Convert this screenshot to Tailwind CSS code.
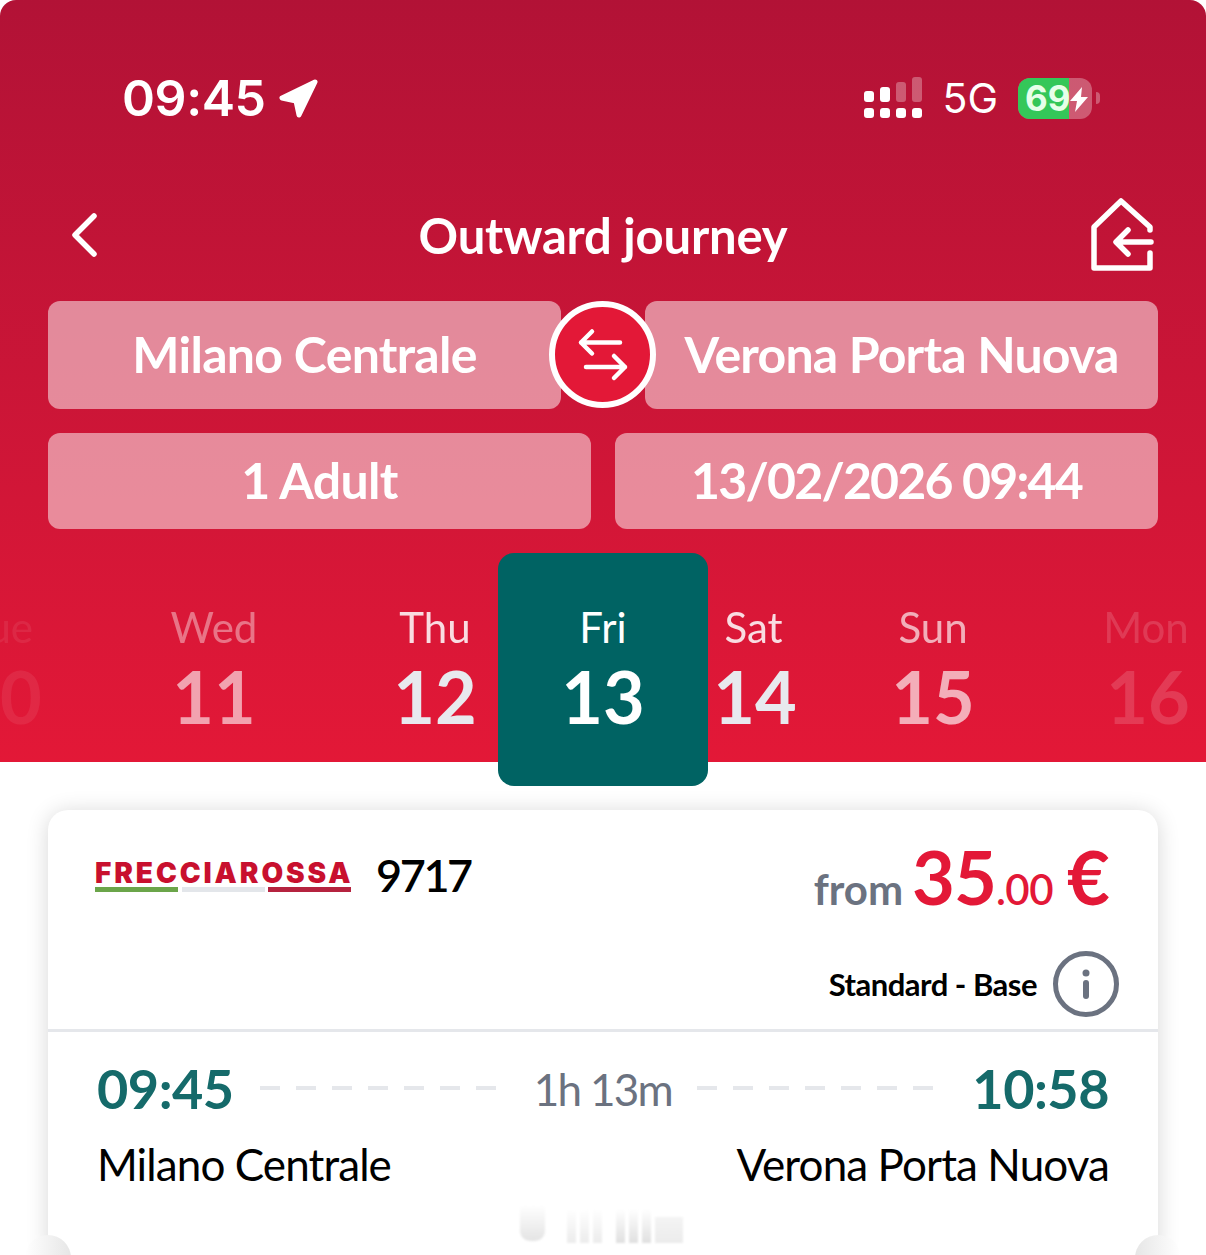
<!DOCTYPE html>
<html lang="en">
<head>
  <meta charset="UTF-8">
  <meta name="viewport" content="width=device-width, initial-scale=1.0">
  <title>Outward journey</title>
  <script src="https://cdn.jsdelivr.net/npm/@tailwindcss/browser@4"></script>
</head>
<body class="bg-white">
  <div class="relative w-[1206px] h-[1255px] overflow-hidden bg-white [font-family:Lato,sans-serif]">

    <!-- Red header -->
    <header class="h-[762px] pt-[75px] rounded-t-[16px] bg-linear-to-b from-[#b21236] to-[#e31837] text-white">

      <!-- Status bar -->
      <div class="h-[46px] flex items-center pl-[122px] pr-[106px] [font-family:Inter,sans-serif]">
        <span class="text-[50px] leading-none font-semibold tracking-[-0.4px]">09:45</span>
        <svg class="ml-[12px] w-[41px] h-[41px]" viewBox="0 0 41 41" fill="#fff" stroke="#fff" stroke-width="5" stroke-linejoin="round">
          <path d="M37 4 4 20l14 3 3 14z"/>
        </svg>
        <svg class="ml-auto w-[60px] h-[42px]" viewBox="0 0 60 42" fill="#fff">
          <rect x="1" y="14" width="10" height="11" rx="3"/>
          <rect x="17" y="10" width="10" height="15" rx="3"/>
          <rect x="33" y="5" width="10" height="20" rx="3" fill-opacity=".3"/>
          <rect x="49" y="0" width="10" height="25" rx="3" fill-opacity=".3"/>
          <rect x="1" y="31" width="10" height="10" rx="3"/>
          <rect x="17" y="31" width="10" height="10" rx="3"/>
          <rect x="33" y="31" width="10" height="10" rx="3"/>
          <rect x="49" y="31" width="10" height="10" rx="3"/>
        </svg>
        <span class="ml-[19px] text-[41px] leading-none font-normal">5G</span>
        <div class="relative ml-[20px] w-[74px] h-[41px] rounded-[12px] overflow-hidden bg-white/30">
          <div class="w-[51px] h-full bg-[#34c759] flex items-center pl-[7px]">
            <span class="text-[35px] leading-none font-bold text-[#e6ffe9]">69</span>
          </div>
          <svg class="absolute left-[52px] top-[9px] w-[18px] h-[25px]" viewBox="0 0 18 25" fill="#fff">
            <path d="M12 0 0 14h7L5 25 18 10h-7z"/>
          </svg>
        </div>
        <div class="ml-[4px] w-[4px] h-[12px] rounded-r-full bg-white/30"></div>
      </div>

      <!-- Nav bar -->
      <div class="mt-[77px] h-[72px] grid grid-cols-[1fr_auto_1fr] items-center pl-[70px] pr-[52px]">
        <svg class="w-[28px] h-[46px]" viewBox="0 0 28 46" fill="none" stroke="#fff" stroke-width="5.5" stroke-linecap="round" stroke-linejoin="round">
          <path d="M24 4 5 23l19 19"/>
        </svg>
        <h1 class="-ml-[18px] text-[49px] leading-none font-bold tracking-[-0.2px]">Outward journey</h1>
        <svg class="justify-self-end w-[64px] h-[74px]" viewBox="0 0 64 74" fill="none" stroke="#fff" stroke-width="5.5" stroke-linecap="round" stroke-linejoin="round">
          <path d="M60 32v-3L31 3 4 29v41h56V55"/>
          <path d="M61 44H27M38 32 26 44l12 12"/>
        </svg>
      </div>

      <!-- Route and passengers -->
      <div class="relative mt-[31px] px-[48px] flex justify-between">
        <div class="w-[513px] h-[108px] pb-[2px] rounded-[12px] bg-white/50 flex items-center justify-center text-[50px] font-bold tracking-[-0.7px]">Milano Centrale</div>
        <div class="w-[513px] h-[108px] pb-[2px] rounded-[12px] bg-white/50 flex items-center justify-center text-[50px] font-bold tracking-[-0.8px]">Verona Porta Nuova</div>
        <div class="absolute left-[549px] top-0 w-[107px] h-[107px] rounded-full border-[6px] border-white bg-[#e31837] flex items-center justify-center">
          <svg class="w-[56px] h-[56px]" viewBox="0 0 56 56" fill="none" stroke="#fff" stroke-width="4.5" stroke-linecap="round" stroke-linejoin="round">
            <path d="M45 15.5H6M17 4.5 6 15.5l11 11"/>
            <path d="M11 40h39M39 29l11 11-11 11"/>
          </svg>
        </div>
      </div>
      <div class="mt-[24px] px-[48px] flex justify-between">
        <div class="w-[543px] h-[96px] pb-[2px] rounded-[12px] bg-white/50 flex items-center justify-center text-[50px] font-bold tracking-[-0.7px]">1 Adult</div>
        <div class="w-[543px] h-[96px] pb-[2px] rounded-[12px] bg-white/50 flex items-center justify-center text-[50px] font-bold tracking-[-1.8px]">13/02/2026 09:44</div>
      </div>

      <!-- Date strip -->
      <div class="mt-[24px] h-[233px] -ml-[56px] flex w-[1288px]">
        <div class="w-[112px] flex flex-col items-center pt-[49px] opacity-[.07]">
          <span class="text-[42px] leading-[50px]">Tue</span>
          <span class="mt-[5px] text-[72px] leading-[78px] font-bold">10</span>
        </div>
        <div class="w-[316px] flex flex-col items-center pt-[49px]">
          <span class="text-[42px] leading-[50px] opacity-40">Wed</span>
          <span class="mt-[5px] text-[72px] leading-[78px] font-bold opacity-60">11</span>
        </div>
        <div class="w-[126px] flex flex-col items-center pt-[49px]">
          <span class="text-[42px] leading-[50px] opacity-85">Thu</span>
          <span class="mt-[5px] text-[72px] leading-[78px] font-bold text-[#e8e9ee]">12</span>
        </div>
        <div class="w-[210px] rounded-[16px] bg-[#006363] flex flex-col items-center pt-[49px]">
          <span class="text-[42px] leading-[50px]">Fri</span>
          <span class="mt-[5px] text-[72px] leading-[78px] font-bold">13</span>
        </div>
        <div class="w-[94px] flex flex-col items-center pt-[49px]">
          <span class="pr-[3px] text-[42px] leading-[50px] opacity-85">Sat</span>
          <span class="mt-[5px] text-[72px] leading-[78px] font-bold text-[#e8e9ee]">14</span>
        </div>
        <div class="w-[262px] flex flex-col items-center pt-[49px]">
          <span class="text-[42px] leading-[50px] opacity-65">Sun</span>
          <span class="mt-[5px] text-[72px] leading-[78px] font-bold opacity-65">15</span>
        </div>
        <div class="w-[168px] flex flex-col items-center pt-[49px]">
          <span class="pr-[4px] text-[42px] leading-[50px] opacity-15">Mon</span>
          <span class="mt-[5px] text-[72px] leading-[78px] font-bold opacity-15">16</span>
        </div>
      </div>
    </header>

    <!-- Train card -->
    <section class="relative mx-[48px] mt-[48px] h-[445px] rounded-t-[20px] bg-white shadow-[0_2px_22px_rgba(0,0,0,0.16)]">
      <div class="h-[219px] flex flex-col">
        <div class="flex items-start justify-between pl-[47px] pr-[48px] pt-[30px]">
          <div class="flex items-center pt-[13px]">
            <div class="w-[256px]">
              <div class="text-[28px] leading-[26px] font-black tracking-[2.9px] whitespace-nowrap text-[#c8102e] [font-family:Inter,sans-serif]">FRECCIAROSSA</div>
              <div class="mt-[1px] flex justify-between">
                <div class="w-[83px] h-[5px] bg-[#6ba54a]"></div>
                <div class="w-[83px] h-[5px] bg-[#e3e6ea]"></div>
                <div class="w-[83px] h-[5px] bg-[#b5233f]"></div>
              </div>
            </div>
            <span class="ml-[25px] text-[45px] leading-none font-semibold tracking-[-2.4px] text-black">9717</span>
          </div>
          <div class="flex items-baseline">
            <span class="text-[42px] leading-none font-bold text-[#6b7280]">from</span>
            <span class="ml-[9px] text-[74px] leading-none font-bold tracking-[-1px] text-[#e31837]">35</span>
            <span class="text-[42px] leading-none font-semibold tracking-[-0.5px] text-[#e31837]">.00</span>
            <span class="ml-[14px] text-[74px] leading-none font-bold text-[#e31837]">€</span>
          </div>
        </div>
        <div class="mt-auto pb-[12px] flex items-center justify-end pr-[39px]">
          <span class="text-[31px] font-bold tracking-[-0.5px] text-black">Standard - Base</span>
          <div class="ml-[16px] w-[66px] h-[66px] rounded-full border-[5px] border-[#6b7280] flex items-center justify-center">
            <svg class="w-[10px] h-[30px]" viewBox="0 0 10 30" fill="#6b7280">
              <circle cx="5" cy="4" r="3.5"/>
              <rect x="2" y="11" width="6" height="19" rx="3"/>
            </svg>
          </div>
        </div>
      </div>
      <div class="h-[3px] bg-[#e5e7eb]"></div>

      <div class="pt-[27px] pl-[49px] pr-[49px]">
        <div class="h-[60px] flex items-center">
          <span class="text-[54px] leading-none font-bold tracking-[-0.5px] text-[#156a6a]">09:45</span>
          <div class="ml-[26px] mb-[2px] w-[236px] h-[4px] bg-[repeating-linear-gradient(90deg,#e5e7eb_0_20px,transparent_20px_36px)]"></div>
          <span class="ml-[38px] text-[44px] leading-none tracking-[-1.7px] text-[#6b7280]">1h 13m</span>
          <div class="ml-[25px] mb-[2px] w-[236px] h-[4px] bg-[repeating-linear-gradient(90deg,#e5e7eb_0_20px,transparent_20px_36px)]"></div>
          <span class="ml-auto text-[54px] leading-none font-bold tracking-[-0.5px] text-[#156a6a]">10:58</span>
        </div>
        <div class="mt-[15px] flex justify-between text-[44px] leading-[60px] tracking-[-0.9px] text-black">
          <span>Milano Centrale</span>
          <span>Verona Porta Nuova</span>
        </div>
      </div>

      <!-- Watermark ghost over the card -->
      <div class="absolute left-[470px] top-[395px] flex items-end blur-[1px]">
        <div class="w-[29px] h-[38px] rounded-b-[12px] border-b-2 border-x-2 border-white bg-linear-to-b from-white to-[#e4e4e4]"></div>
        <div class="ml-[20px] flex items-end gap-[4px]">
          <div class="w-[9px] h-[34px] bg-linear-to-b from-white to-[#ececec]"></div>
          <div class="w-[9px] h-[34px] bg-linear-to-b from-white to-[#ececec]"></div>
          <div class="w-[9px] h-[34px] bg-linear-to-b from-white to-[#ececec]"></div>
          <div class="w-[9px] h-[34px] ml-[10px] bg-linear-to-b from-white to-[#e0e0e0]"></div>
          <div class="w-[9px] h-[34px] bg-linear-to-b from-white to-[#e0e0e0]"></div>
          <div class="w-[9px] h-[34px] bg-linear-to-b from-white to-[#e0e0e0]"></div>
          <div class="w-[28px] h-[26px] bg-linear-to-b from-[#f4f4f4] to-[#ececec]"></div>
        </div>
      </div>

      <!-- Ticket notches -->
      <div class="absolute -left-[23px] -bottom-[26px] w-[46px] h-[46px] rounded-full bg-linear-to-r from-white to-[#e6e6e6]"></div>
      <div class="absolute -right-[23px] -bottom-[26px] w-[46px] h-[46px] rounded-full bg-linear-to-l from-white to-[#e6e6e6]"></div>
    </section>
  </div>
</body>
</html>
